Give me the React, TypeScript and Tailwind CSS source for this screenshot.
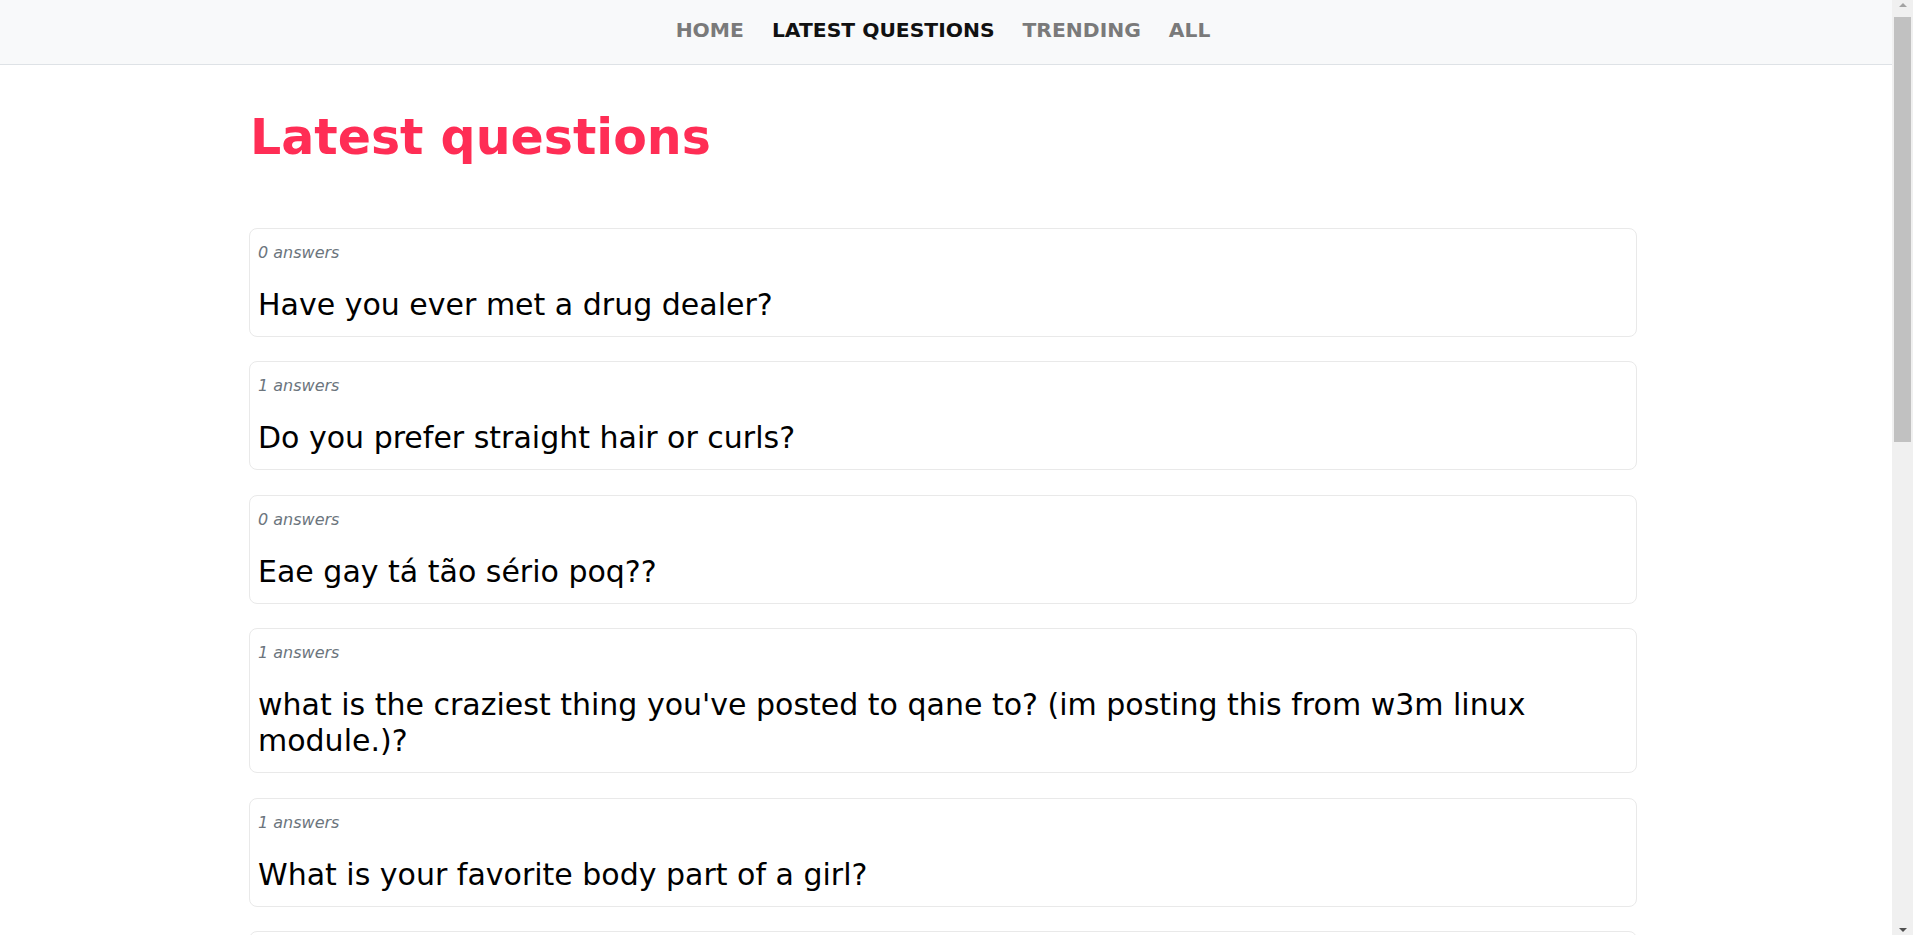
import React from 'react';

type Question = {
    id: number;
    answers: number;
    text: string;
};

const questions: Question[] = [
    { id: 1, answers: 0, text: 'Have you ever met a drug dealer?' },
    { id: 2, answers: 1, text: 'Do you prefer straight hair or curls?' },
    { id: 3, answers: 0, text: 'Eae gay tá tão sério poq??' },
    { id: 4, answers: 1, text: "what is the craziest thing you've posted to qane to? (im posting this from w3m linux module.)?" },
    { id: 5, answers: 1, text: 'What is your favorite body part of a girl?' },
    { id: 6, answers: 2, text: 'What song are you listening to right now?' },
    { id: 7, answers: 0, text: 'Cats or dogs?' },
    { id: 8, answers: 3, text: 'What is the best thing that happened to you today?' },
    { id: 9, answers: 1, text: 'Do you believe in aliens?' },
    { id: 10, answers: 0, text: 'What would you do with a million dollars?' },
    { id: 11, answers: 2, text: 'Qual é a sua comida favorita?' },
    { id: 12, answers: 1, text: 'Have you ever been in love?' },
];

const navItems = [
    { label: 'HOME', active: false },
    { label: 'LATEST QUESTIONS', active: true },
    { label: 'TRENDING', active: false },
    { label: 'ALL', active: false },
];

// browser-style scrollbar drawn over the right edge
const Scrollbar: React.FC = () => (
    <div className="fixed top-0 right-0 h-screen w-[21px] bg-[#f0f0f0] flex flex-col items-center pt-[3px] pb-[3px]">
        <div className="w-0 h-0 border-l-[4px] border-r-[4px] border-b-[4px] border-l-transparent border-r-transparent border-b-[#a3a3a3]"></div>
        <div className="mt-[10px] self-stretch mx-[2px] h-[425px] bg-[#c1c1c1]"></div>
        <div className="flex-1"></div>
        <div className="w-0 h-0 border-l-[4px] border-r-[4px] border-t-[4px] border-l-transparent border-r-transparent border-t-[#505050]"></div>
    </div>
);

const App: React.FC = () => {
    return (
        <div className="min-h-screen bg-white pr-[21px] font-['DejaVu_Sans',Verdana,sans-serif] text-black">
            {/* Navbar */}
            <nav className="w-full h-[65px] bg-[#f8f9fa] border-b border-[#dee2e6]">
                <div className="w-[1394px] mx-auto pr-[6px] pb-[4px] h-full flex items-center justify-center gap-[28px]">
                    {navItems.map(item => (
                        <a
                            key={item.label}
                            href="#"
                            className={`text-[20.3px] font-bold leading-none ${item.active ? 'text-[#111]' : 'text-[#7a7a7a]'}`}
                        >
                            {item.label}
                        </a>
                    ))}
                </div>
            </nav>

            <main className="w-[1394px] mx-auto pr-[6px] pb-10">
                <h1 className="mt-[44px] ml-[1px] text-[49px] font-bold leading-[1.2] text-[#ff2d55]">Latest questions</h1>

                <div className="mt-[60px] flex flex-col gap-[24.5px]">
                    {questions.map(q => (
                        <div key={q.id} className="border border-[#e9e9e9] rounded-lg pl-2 pr-2 pt-3 pb-[13px]">
                            <p className="text-[16px] leading-6 italic text-[#6c757d] mb-[22px]">{q.answers} answers</p>
                            <h3 className="text-3xl leading-9 text-black">{q.text}</h3>
                        </div>
                    ))}
                </div>
            </main>

            <Scrollbar />
        </div>
    );
};

export default App;
